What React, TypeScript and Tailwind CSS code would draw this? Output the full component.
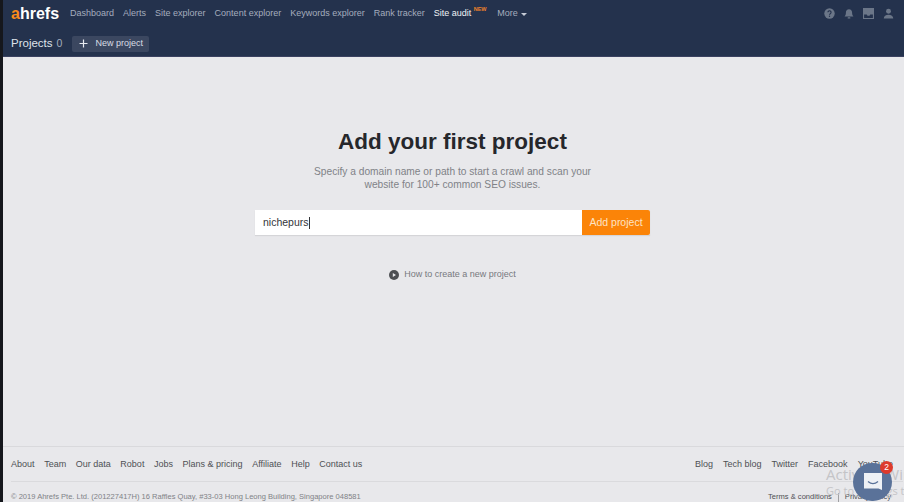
import React from "react";

const mainNav = ["Dashboard", "Alerts", "Site explorer", "Content explorer", "Keywords explorer", "Rank tracker"];
const footerLeft = ["About", "Team", "Our data", "Robot", "Jobs", "Plans & pricing", "Affiliate", "Help", "Contact us"];
const footerRight = ["Blog", "Tech blog", "Twitter", "Facebook", "YouTube"];

const App = () => {
  return (
    <div className="relative flex h-[502px] w-[904px] overflow-hidden bg-[#e8e8eb] font-['Liberation_Sans',Arial,sans-serif]">
      <div className="w-[3px] shrink-0 bg-[#15171c]" />
      <div className="flex min-w-0 flex-1 flex-col">
        {/* Header */}
        <header className="h-[57px] shrink-0 border-b border-[#3a4160] bg-[#24324d] pl-[8px] pr-[10px]">
          <div className="flex h-[27px] items-center">
            <span className="mr-[11px] text-[16px] font-bold leading-none text-white">
              <span className="text-[#f98a1b]">a</span>hrefs
            </span>
            <nav className="flex items-center gap-[9px] text-[9px] text-[#a4adbd]">
              {mainNav.map((item) => (
                <span key={item}>{item}</span>
              ))}
              <span className="relative mr-[17px] text-[#f1f3f6]">
                Site audit
                <span className="absolute left-[40px] top-[-2px] text-[5.5px] font-bold text-[#f0822a]">NEW</span>
              </span>
              <span className="flex items-center gap-[3px]">
                More
                <span className="mt-[1px] h-0 w-0 border-x-[3px] border-t-[3px] border-x-transparent border-t-[#c5cbd6]" />
              </span>
            </nav>
            <div className="ml-auto flex items-center gap-[9px] text-[#6b7688]">
              <svg width="11" height="11" viewBox="0 0 11 11">
                <circle cx="5.5" cy="5.5" r="5.2" fill="currentColor" />
                <path d="M3.9 4.3a1.6 1.6 0 1 1 2.4 1.4c-.5.3-.8.5-.8 1.1" fill="none" stroke="#24324d" strokeWidth="1.1" />
                <circle cx="5.5" cy="8.3" r=".7" fill="#24324d" />
              </svg>
              <svg width="10" height="12" viewBox="0 0 11 12">
                <path d="M5.5 0.8c-2.2 0-3.4 1.6-3.4 3.6 0 2.4-.6 3.4-1.5 4.4h9.8c-.9-1-1.5-2-1.5-4.4 0-2-1.200-3.600-3.400-3.600z" fill="currentColor" />
                <rect x="4" y="9.600" width="3" height="1.400" rx=".6" fill="currentColor" />
              </svg>
              <svg width="11" height="11" viewBox="0 0 11 11">
                <path d="M0.500 0.500h10v10h-10z" fill="none" stroke="currentColor" strokeWidth="1.200" />
                <path d="M1 1h9v5.500H7.300L6.500 7.800h-2L3.700 6.500H1z" fill="currentColor" />
              </svg>
              <svg width="11" height="11" viewBox="0 0 12 11">
                <circle cx="6" cy="3" r="2.700" fill="currentColor" />
                <path d="M0.800 11c0-2.800 2.200-4.200 5.200-4.200s5.200 1.400 5.200 4.200z" fill="currentColor" />
              </svg>
            </div>
          </div>
          <div className="mt-[8px] flex items-center">
            <span className="text-[11.5px] text-[#dfe3ea]">Projects</span>
            <span className="ml-[4px] text-[10.5px] text-[#a4adbd]">0</span>
            <button className="ml-[10px] flex h-[16px] w-[77px] items-center rounded-[2px] bg-[#3b4760] pl-[7px] text-[9px] text-[#d9dde4]">
              <svg width="9" height="9" viewBox="0 0 9 9" className="mr-[7px]">
                <path d="M4.500 0.500v8M0.500 4.500h8" stroke="#e8ebf0" strokeWidth="1.200" />
              </svg>
              New project
            </button>
          </div>
        </header>

        {/* Main */}
        <main className="flex flex-1 flex-col items-center pr-[2px] pt-[70px]">
          <h1 className="text-[22.5px] font-bold leading-[30px] text-[#26272b]">Add your first project</h1>
          <p className="mt-[8px] w-[300px] text-center text-[10.2px] leading-[13px] text-[#808287]">
            Specify a domain name or path to start a crawl and scan your website for 100+ common SEO issues.
          </p>
          <div className="mt-[19px] flex h-[25px] w-[395px] shadow-[0_1px_1px_rgba(0,0,0,0.08)]">
            <div className="flex flex-1 items-center bg-white pl-[8px] text-[10.5px] text-[#333539]">
              nichepurs
              <span className="h-[12px] w-px bg-[#333539]" />
            </div>
            <button className="w-[68px] rounded-r-[2px] bg-[#fb8408] text-[10.5px] text-[#fde3c4]">Add project</button>
          </div>
          <div className="mt-[33px] flex items-center gap-[5px] text-[9px] text-[#77797e]">
            <svg width="10" height="10" viewBox="0 0 10 10">
              <circle cx="5" cy="5" r="5" fill="#4d4f53" />
              <path d="M3.800 2.900l3.200 2.100-3.200 2.100z" fill="#e8e8eb" />
            </svg>
            How to create a new project
          </div>
        </main>

        {/* Footer */}
        <footer className="h-[56px] shrink-0 border-t border-[#d9d9dc] pl-[8px] pr-[1px] text-[9px] text-[#4e5054]">
          <div className="flex h-[34px] items-center justify-between pr-[10px] pt-[2px]">
            <div className="flex gap-[9.6px]">
              {footerLeft.map((item) => (
                <span key={item}>{item}</span>
              ))}
            </div>
            <div className="flex gap-[10px]">
              {footerRight.map((item) => (
                <span key={item}>{item}</span>
              ))}
            </div>
          </div>
          <div className="flex h-[21px] items-start justify-between border-t border-[#dadadd] pr-[12px] pt-[10px] text-[7.55px] leading-[10px]">
            <span className="text-[#808287]">© 2019 Ahrefs Pte. Ltd. (201227417H) 16 Raffles Quay, #33-03 Hong Leong Building, Singapore 048581</span>
            <span className="flex items-center gap-[6px] text-[#4e5054]">
              Terms &amp; conditions
              <span className="h-[9px] w-px bg-[#a0a0a3]" />
              Privacy policy
            </span>
          </div>
        </footer>
      </div>

      {/* Windows watermark */}
      <div className="pointer-events-none absolute left-[826px] top-[464px] whitespace-nowrap font-['Open_Sans',sans-serif] text-[#c4c4c7]">
        <div className="text-[15px] leading-[20px]">Activate Windows</div>
        <div className="text-[11px] leading-[14px]">Go to Settings to activate</div>
      </div>

      {/* Chat widget */}
      <div className="absolute left-[853px] top-[463px] flex h-[38px] w-[39px] items-center justify-center rounded-full bg-[#5a7299]">
        <svg width="20" height="20" viewBox="0 0 20 20">
          <path d="M1 1h18v17l-3.500 -1.500H1z" fill="#eef1f5" />
          <path d="M5 9.500c3 2.500 7 2.500 10 0" fill="none" stroke="#5a7299" strokeWidth="1.300" />
        </svg>
      </div>
      <div className="absolute left-[880px] top-[461px] flex h-[13px] w-[13px] items-center justify-center rounded-full bg-[#dd3a2c] text-[8.5px] text-white">
        2
      </div>
    </div>
  );
};

export default App;
